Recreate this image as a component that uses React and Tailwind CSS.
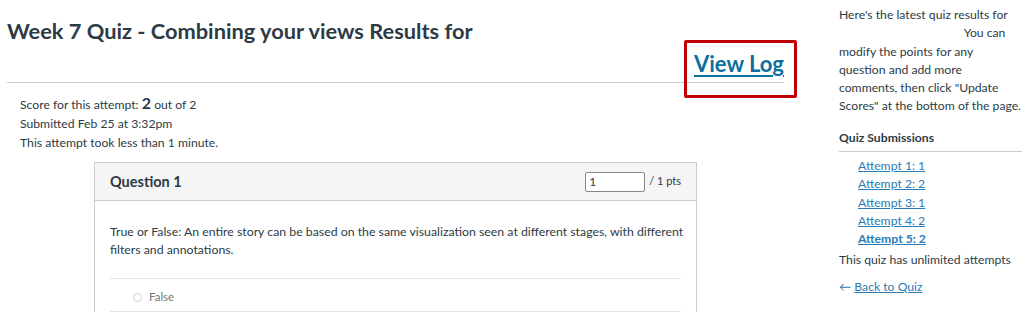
import React from 'react'

// results page of a quiz: main column on the left, submissions sidebar on the right
const attempts = [
	{ label: 'Attempt 1: 1' },
	{ label: 'Attempt 2: 2' },
	{ label: 'Attempt 3: 1' },
	{ label: 'Attempt 4: 2' },
	{ label: 'Attempt 5: 2', current: true },
];

export default function App() {
	return (
		<div className="flex h-[323px] w-[1032px] overflow-hidden bg-white font-['Lato','Liberation_Sans',sans-serif] text-[#2d3b45]">
			<main className="w-[839px] shrink-0 pl-[7px]">
				<header className="relative h-[83px] w-[777px] border-b border-[#c7cdd1]">
					<h1 className="pt-[17px] text-[21.8px] font-bold leading-[28px]">
						Week 7 Quiz - Combining your views Results for
					</h1>
					<div className="mt-[5px] flex justify-end">
						<a href="#" className="text-[22px] font-bold leading-[28px] text-[#0b6fa0] underline decoration-2 underline-offset-[3px]">
							View Log
						</a>
					</div>
					{/* red annotation box over the link */}
					<div className="pointer-events-none absolute left-[677px] top-[40px] h-[58px] w-[113px] rounded-[2px] border-[3px] border-[#c00000]" />
				</header>

				<div className="pl-[13px] pt-[12px] text-[12.2px] leading-[19px]">
					<div>
						Score for this attempt: <span className="text-[16px] font-bold leading-none">2</span> out of 2
					</div>
					<div>Submitted Feb 25 at 3:32pm</div>
					<div>This attempt took less than 1 minute.</div>
				</div>

				<section className="ml-[87px] mt-[10px] w-[603px] border border-b-0 border-[#c7cdd1]">
					<div className="flex h-[38px] items-center justify-between border-b border-[#c7cdd1] bg-[#f5f5f5] pl-[15px] pr-[15px]">
						<h2 className="text-[14.5px] font-bold">Question 1</h2>
						<div className="flex items-center gap-[4px] text-[11px]">
							<input
								defaultValue="1"
								className="h-[20px] w-[60px] rounded-[2px] border border-[#888] bg-white px-[3px] text-[12px] text-[#2d3b45] outline-none"
							/>
							<span>/ 1 pts</span>
						</div>
					</div>
					<div className="px-[15px] pt-[22px]">
						<p className="-mr-[10px] text-[12.3px] leading-[18px]">
							True or False: An entire story can be based on the same visualization seen at different stages, with different filters and annotations.
						</p>
						<div className="mt-[19px] flex h-[34px] items-center border-y border-[#e5e5e5] pl-[23px] pt-[4px] text-[11.5px] text-[#777]">
							<span className="mr-[7px] inline-block h-[9px] w-[9px] rounded-full border border-[#ccc]" />
							False
						</div>
					</div>
				</section>
			</main>

			<aside className="w-[183px] shrink-0 pt-[6px] text-[12.2px] leading-[18.3px]">
				<p>
					Here's the latest quiz results for <span className="inline-block w-[122px]" /> You can modify the points for any question and add more comments, then click "Update Scores" at the bottom of the page.
				</p>
				<h3 className="mt-[13px] border-b border-[#c7cdd1] pb-[4px] font-bold">Quiz Submissions</h3>
				<ul className="pl-[19px] pt-[5px]">
					{attempts.map((a) => (
						<li key={a.label}>
							<a href="#" className={`text-[#2a7bb4] underline ${a.current ? 'font-bold text-[#1e6a9c]' : ''}`}>
								{a.label}
							</a>
						</li>
					))}
				</ul>
				<p className="mt-[2px]">This quiz has unlimited attempts</p>
				<div className="mt-[9px] text-[#2a7bb4]">
					← <a href="#" className="underline">Back to Quiz</a>
				</div>
			</aside>
		</div>
	);
}
